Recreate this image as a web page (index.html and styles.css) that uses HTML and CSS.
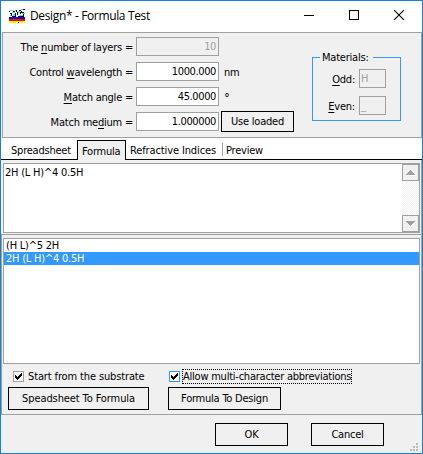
FILE: index.html
```
<!DOCTYPE html>
<html lang="en">
<head>
<meta charset="utf-8">
<title>Design* - Formula Test</title>
<link rel="stylesheet" href="styles.css">
</head>
<body>
<div class="window">
  <header class="titlebar">
    <svg class="app-icon" width="16" height="16" viewBox="0 0 16 16" shape-rendering="crispEdges">
      <path fill="#00f" d="M0 8h16v2H0z"/><path fill="#f00" d="M0 10h16v2H0z"/><path fill="#ff0" d="M0 12h16v2H0z"/>
      <path fill="#40e0e0" d="M1 1h3v1H1zM3 3h3v1H3zM4 5h2v2H4zM6 1h2v1H6zM9 2h2v2H9zM12 0h2v1h-2zM13 4h3v1h-3zM11 6h4v1h-4zM1 6h1v1H1z"/>
      <path fill="#000" d="M0 2h1v1H0zM1 4h2v1H1zM2 5h1v2H2zM3 7h4v1H3zM4 2h2v1H4zM6 4h1v3H6zM7 1h1v2H7zM8 3h1v3H8zM9 7h6v1H9zM10 1h2v1h-2zM11 3h1v2h-1zM12 2h1v2h-1zM14 0h2v1h-2zM13 3h2v1h-2zM14 5h1v2h-1zM9 9h1v1H9zM9 13h1v1H9z"/>
    </svg>
    <h1>Design* - Formula Test</h1>
    <div class="controls">
      <svg width="10" height="10" shape-rendering="crispEdges"><path d="M0 5.5h10" stroke="#000"/></svg>
      <svg width="10" height="10" shape-rendering="crispEdges"><path d="M.5.5h9v9h-9z" fill="none" stroke="#000"/></svg>
      <svg width="10" height="10"><path d="M0 0l10 10M10 0L0 10" stroke="#000" stroke-width="1.1"/></svg>
    </div>
  </header>

  <section class="settings">
    <div class="fields">
      <label>The <u>n</u>umber of layers =</label><span class="input off">10</span><span></span>
      <label>Control <u>w</u>avelength =</label><span class="input">1000.000</span><span class="unit">nm</span>
      <label><u>M</u>atch angle =</label><span class="input">45.0000</span><span class="unit degree">°</span>
      <label>Match me<u>d</u>ium =</label><span class="input">1.000000</span><button class="load">Use loaded</button>
    </div>
    <fieldset class="materials">
      <legend>Materials:</legend>
      <label><u>O</u>dd:</label><span class="input off">H</span>
      <label><u>E</u>ven:</label><span class="input off">_</span>
    </fieldset>
  </section>

  <nav class="tabs">
    <span class="tab t1">Spreadsheet</span><span class="tab active">Formula</span><span class="tab t3">Refractive Indices</span><span class="tab t4">Preview</span>
  </nav>

  <section class="editor">
    <div class="formula">
      <span>2H (L H)^4 0.5H</span>
      <div class="scrollbar">
        <div class="arrow"><svg width="10" height="6" shape-rendering="crispEdges"><path d="M1 5h9v1H1z" fill="#fff"/><path d="M4 0h1v1h1v1h1v1h1v1h1v1H0V4h1V3h1V2h1V1h1z" fill="#a0a0a0"/></svg></div>
        <div class="arrow"><svg width="10" height="6" shape-rendering="crispEdges"><path d="M1 1h9v1H9v1H8v1H7v1H6v1H5V5H4z" fill="#fff"/><path d="M0 0h9v1H8v1H7v1H6v1H5v1H4V4H3V3H2V2H1V1H0z" fill="#a0a0a0"/></svg></div>
      </div>
    </div>
  </section>

  <section class="library">
    <ul class="list"><li>(H L)^5 2H</li><li class="selected">2H (L H)^4 0.5H</li></ul>
    <div class="actions">
      <div class="check"><span class="box"><svg width="7" height="7" shape-rendering="crispEdges"><path d="M0 2h1v1h1v1h1V3h1V2h1V1h1V0h1v3H6v1H5v1H4v1H3v1H2V6H1V5H0z"/></svg></span><span class="text">Start from the substrate</span></div>
      <div class="check c2"><span class="box focus"><svg width="7" height="7" shape-rendering="crispEdges"><path d="M0 2h1v1h1v1h1V3h1V2h1V1h1V0h1v3H6v1H5v1H4v1H3v1H2V6H1V5H0z"/></svg></span><span class="text focused">Allow multi-character abbreviations</span></div>
      <button class="b1">Speadsheet To Formula</button>
      <button class="b2">Formula To Design</button>
    </div>
  </section>

  <footer class="footer">
    <button>OK</button><button>Cancel</button>
    <svg class="grip" width="8" height="8" shape-rendering="crispEdges"><path fill="#bcbcbc" d="M6 0h2v2H6zM3 3h2v2H3zM6 3h2v2H6zM0 6h2v2H0zM3 6h2v2H3zM6 6h2v2H6z"/></svg>
  </footer>
</div>
</body>
</html>
```
FILE: styles.css
```
* { box-sizing: border-box; }
body { margin: 0; font: 11px/13px "DejaVu Sans Condensed", "DejaVu Sans", sans-serif; font-stretch: condensed; letter-spacing: -0.22px; color: #000; }
.window { width: 423px; height: 454px; border: 1px solid #1a7fd1; background: #f0f0f0; display: flex; flex-direction: column; overflow: hidden; white-space: nowrap; }
.titlebar { height: 31px; background: #fff; display: flex; align-items: center; padding: 0 18px 0 8px; }
.app-icon { margin-top: 1px; }
h1 { margin: -1px 0 0 5px; font: 12px/16px "Open Sans", sans-serif; letter-spacing: -0.36px; }
.controls { margin-left: auto; display: flex; gap: 35px; margin-top: -3px; }
.controls svg { display: block; }
button { font: inherit; letter-spacing: inherit; color: inherit; padding: 0; margin: 0; border: 1px solid #000; border-radius: 0; background: #f0f0f0; }
u { text-underline-offset: 2px; text-decoration-thickness: 1px; }

.settings { height: 106px; border: 1px solid #a0a0a0; margin: 0 0 0 1px; display: flex; align-items: flex-start; }
.fields { display: grid; grid-template-columns: 130px 83px 75px; grid-auto-rows: 19px; row-gap: 6px; padding-top: 4px; column-gap: 3px; }
.fields label { text-align: right; padding-top: 4px; }
.input { border: 1px solid #a0a0a0; background: #fff; padding: 2px 2px 0; text-align: right; height: 19px; letter-spacing: -0.38px; }
.input.off { background: #f0f0f0; color: #a0a0a0; }
.unit { padding: 4px 0 0 2px; }
.degree { font-size: 13px; }
.load { height: 21px; width: 73px; margin: -1px 0 0 -1px; }
.materials { margin: 18px 0 0 15px; padding: 5px 14px 0 13px; width: 89px; height: 70px; border: 1px solid #39f; display: grid; grid-template-columns: 30px 27px; grid-auto-rows: 19px; gap: 8px 3px; align-content: start; justify-content: end; }
.materials legend { margin-left: -6px; padding: 0 4px 0 2px; }
.materials label { text-align: right; padding: 4px 1px 0 0; }
.materials .input { text-align: left; padding-left: 1px; }

.tabs { height: 22px; background: #fff; border-bottom: 1px solid #000; display: flex; align-items: flex-end; padding-left: 10px; }
.tab { height: 19px; padding: 4px 0 0; }
.t1 { width: 66px; }
.tab.active { width: 49px; height: 20px; margin-bottom: -1px; border: 1px solid #000; border-bottom: 0; background: #f0f0f0; padding-left: 4px; }
.t3 { width: 97px; padding-left: 4px; position: relative; letter-spacing: -0.12px; }
.t3::after { content: ""; position: absolute; right: 0; top: 3px; height: 13px; width: 1px; background: #a0a0a0; }
.t4 { padding-left: 3px; }

.editor { height: 75px; padding: 3px 1px 1px 2px; border-bottom: 1px solid #a0a0a0; border-right: 1px solid #a0a0a0; }
.formula { height: 70px; border: 1px solid #a0a0a0; background: #fff; display: flex; justify-content: space-between; padding-left: 1px; }
.formula > span { padding-top: 2px; }
.scrollbar { width: 17px; background: repeating-conic-gradient(#f0f0f0 0 25%, #fff 0 50%) 0 0 / 2px 2px; display: flex; flex-direction: column; justify-content: space-between; }
.arrow { height: 17px; border: 1px solid #a0a0a0; background: #f0f0f0; display: grid; place-items: center; }

.library { height: 180px; border: 1px solid #a0a0a0; border-top: 0; padding: 3px 0 0 1px; }
.list { margin: 0; padding: 0; list-style: none; height: 126px; width: 417px; border: 1px solid #a0a0a0; background: #fff; }
.list li { height: 13px; padding-left: 2px; }
.selected { background: #39f; color: #fff; }
.actions { display: grid; grid-template-columns: 160px auto; grid-template-rows: 15px 23px; row-gap: 3px; padding: 5px 0 0 5px; justify-content: start; }
.check { display: flex; align-items: center; padding-left: 5px; letter-spacing: -0.13px; }
.c2 { padding-left: 1px; letter-spacing: -0.23px; }
.box { width: 11px; height: 11px; border: 1px solid #a0a0a0; background: #fff; display: grid; place-items: center; margin-right: 4px; }
.box.focus { border-color: #39f; margin-right: 3px; }
.focused { outline: 1px dotted #000; outline-offset: 0; }
.b1 { width: 141px; letter-spacing: -0.1px; }
.b2 { width: 113px; }

.footer { height: 38px; display: flex; padding: 8px 4px 0 214px; gap: 23px; }
.footer button { width: 73px; height: 23px; }
.grip { margin: 20px 0 0 auto; }
```
